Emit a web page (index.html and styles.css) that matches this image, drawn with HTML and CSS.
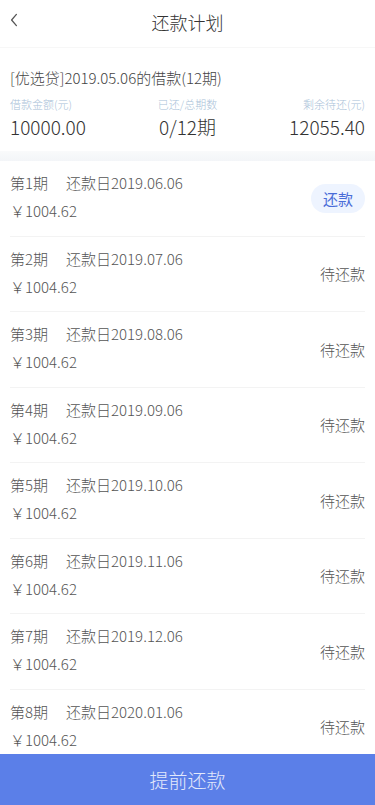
FILE: index.html
```html
<!DOCTYPE html>
<html lang="zh-CN">
<head>
<meta charset="UTF-8" />
<meta name="viewport" content="width=device-width, initial-scale=1" />
<title>还款计划</title>
<link rel="stylesheet" href="styles.css">
</head>
<body>
<header class="nav">
  <button class="nav-back" aria-label="返回">
    <svg viewBox="0 0 12 20" aria-hidden="true"><path d="M9 3 L3 10 L9 17" /></svg>
  </button>
  <h1 class="nav-title">还款计划</h1>
</header>

<section class="summary">
  <div class="loan-name">[优选贷]2019.05.06的借款(12期)</div>
  <div class="summary-grid">
    <div class="stat">
      <div class="stat-label">借款金额(元)</div>
      <div class="stat-value">10000.00</div>
    </div>
    <div class="stat center">
      <div class="stat-label">已还/总期数</div>
      <div class="stat-value">0/12期</div>
    </div>
    <div class="stat right">
      <div class="stat-label">剩余待还(元)</div>
      <div class="stat-value">12055.40</div>
    </div>
  </div>
</section>

<div class="gap"></div>

<ul class="plan-list">
  <li class="plan-row">
    <div class="plan-info">
      <div class="plan-line"><span class="plan-no">第1期</span>还款日2019.06.06</div>
      <div class="plan-line">￥1004.62</div>
    </div>
    <button class="btn-repay">还款</button>
  </li>
  <li class="plan-row">
    <div class="plan-info">
      <div class="plan-line"><span class="plan-no">第2期</span>还款日2019.07.06</div>
      <div class="plan-line">￥1004.62</div>
    </div>
    <span class="plan-status">待还款</span>
  </li>
  <li class="plan-row">
    <div class="plan-info">
      <div class="plan-line"><span class="plan-no">第3期</span>还款日2019.08.06</div>
      <div class="plan-line">￥1004.62</div>
    </div>
    <span class="plan-status">待还款</span>
  </li>
  <li class="plan-row">
    <div class="plan-info">
      <div class="plan-line"><span class="plan-no">第4期</span>还款日2019.09.06</div>
      <div class="plan-line">￥1004.62</div>
    </div>
    <span class="plan-status">待还款</span>
  </li>
  <li class="plan-row">
    <div class="plan-info">
      <div class="plan-line"><span class="plan-no">第5期</span>还款日2019.10.06</div>
      <div class="plan-line">￥1004.62</div>
    </div>
    <span class="plan-status">待还款</span>
  </li>
  <li class="plan-row">
    <div class="plan-info">
      <div class="plan-line"><span class="plan-no">第6期</span>还款日2019.11.06</div>
      <div class="plan-line">￥1004.62</div>
    </div>
    <span class="plan-status">待还款</span>
  </li>
  <li class="plan-row">
    <div class="plan-info">
      <div class="plan-line"><span class="plan-no">第7期</span>还款日2019.12.06</div>
      <div class="plan-line">￥1004.62</div>
    </div>
    <span class="plan-status">待还款</span>
  </li>
  <li class="plan-row">
    <div class="plan-info">
      <div class="plan-line"><span class="plan-no">第8期</span>还款日2020.01.06</div>
      <div class="plan-line">￥1004.62</div>
    </div>
    <span class="plan-status">待还款</span>
  </li>
</ul>

<button class="btn-prepay">提前还款</button>
</body>
</html>
```

FILE: styles.css
```css
* {
  box-sizing: border-box;
}
body {
  margin: 0;
  font-family: "Noto Sans CJK SC", "Noto Sans", sans-serif;
  font-weight: 300;
  background: #ffffff;
  color: #444;
  padding-bottom: 51px;
}
button {
  font-family: inherit;
  font-weight: inherit;
}

/* Nav */
.nav {
  height: 48px;
  display: flex;
  align-items: center;
  justify-content: center;
  position: relative;
  border-bottom: 1px solid #f7f7f7;
}
.nav-back {
  position: absolute;
  left: 4px;
  top: 12px;
  width: 20px;
  height: 20px;
  padding: 0;
  border: none;
  background: none;
}
.nav-back svg {
  width: 10px;
  height: 16px;
  fill: none;
  stroke: #555;
  stroke-width: 1.6;
  stroke-linecap: round;
  stroke-linejoin: round;
}
.nav-title {
  margin: 0 0 4px 0;
  font-size: 18px;
  font-weight: 300;
  color: #333;
}

/* Summary */
.summary {
  padding: 18px 10px 9px 10px;
}
.loan-name {
  font-size: 15px;
  color: #444;
  line-height: 24px;
}
.summary-grid {
  display: flex;
  justify-content: space-between;
  margin-top: 6px;
}
.stat {
  flex: 1;
}
.stat.center {
  text-align: center;
}
.stat.right {
  text-align: right;
}
.stat-label {
  font-size: 11px;
  color: #a9bfd8;
  line-height: 16px;
}
.stat-value {
  font-size: 19px;
  color: #333;
  line-height: 30px;
}

.gap {
  height: 10px;
  background: linear-gradient(#f9fafb, #f3f5f8);
}

/* Plan list */
.plan-list {
  list-style: none;
  margin: 0;
  padding: 0 10px;
}
.plan-row {
  height: 75.5px;
  display: flex;
  align-items: center;
  justify-content: space-between;
  border-bottom: 1px solid #f3f3f3;
}
.plan-info {
  display: flex;
  flex-direction: column;
  gap: 4px;
  margin-top: -2px;
}
.plan-line {
  font-size: 15px;
  line-height: 24px;
  color: #555;
}
.plan-no {
  margin-right: 18px;
}
.plan-status {
  font-size: 15px;
  color: #555;
}
.btn-repay {
  border: none;
  background: #eef4ff;
  color: #4a6cd8;
  font-size: 15px;
  font-weight: 400;
  padding: 4px 12px;
  border-radius: 16px;
}

/* Prepay bar */
.btn-prepay {
  position: fixed;
  left: 0;
  right: 0;
  bottom: 0;
  height: 51px;
  border: none;
  background: #5b7fe8;
  color: #e3e9fb;
  font-size: 19px;
}
```
